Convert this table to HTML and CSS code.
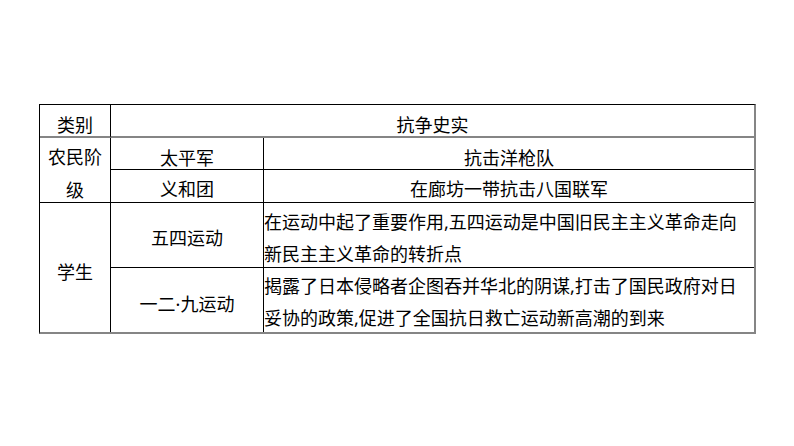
FILE: index.html
```html
<!DOCTYPE html>
<html lang="zh-CN">
<head>
<meta charset="utf-8">
<link rel="stylesheet" href="styles.css">
</head>
<body>
<div class="history">
  <div class="cell head-cat">类别</div>
  <div class="cell head-fact">抗争史实</div>

  <div class="cell farmer">农民阶级</div>
  <div class="cell name row2">太平军</div>
  <div class="cell fact row2 last-col">抗击洋枪队</div>
  <div class="cell name row3">义和团</div>
  <div class="cell fact row3 last-col">在廊坊一带抗击八国联军</div>

  <div class="cell student">学生</div>
  <div class="cell name row4">五四运动</div>
  <div class="cell long row4 last-col">在运动中起了重要作用,五四运动是中国旧民主主义革命走向新民主主义革命的转折点</div>
  <div class="cell name row5 last-row">一二·九运动</div>
  <div class="cell long row5 last-col last-row">揭露了日本侵略者企图吞并华北的阴谋,打击了国民政府对日妥协的政策,促进了全国抗日救亡运动新高潮的到来</div>
</div>
</body>
</html>
```

FILE: styles.css
```css
html, body {
  margin: 0;
  padding: 0;
  background: #ffffff;
}

body {
  font-family: "Noto Sans", "Noto Sans CJK SC", sans-serif;
  color: #000000;
  font-size: 18px;
}

.history {
  margin: 104px 0 0 39px;
  width: 717px;
  box-sizing: border-box;
  display: grid;
  grid-template-columns: 71px 153px 490px;
  grid-template-rows: 33px 32px 33px 65px 64px;
  border-top: 1px solid #000;
  border-left: 1px solid #000;
  border-right: 2px solid #858585;
  border-bottom: 2px solid #858585;
}

.cell {
  box-sizing: border-box;
  border-right: 1px solid #000;
  border-bottom: 1px solid #000;
  text-align: center;
  line-height: 24px;
  white-space: normal;
}

.last-col { border-right: none; }
.last-row { border-bottom: none; }

.head-cat {
  grid-column: 1;
  grid-row: 1;
  padding-top: 8px;
  border-bottom: 2px solid #858585;
}

.head-fact {
  grid-column: 2 / 4;
  grid-row: 1;
  padding-top: 8px;
  border-right: none;
  border-bottom: 2px solid #858585;
}

.farmer {
  grid-column: 1;
  grid-row: 2 / 4;
  line-height: 33px;
  padding-top: 3px;
}

.student {
  grid-column: 1;
  grid-row: 4 / 6;
  padding-top: 57px;
  border-bottom: none;
}

.name { grid-column: 2; }
.fact { grid-column: 3; }
.long {
  grid-column: 3;
  text-align: left;
  line-height: 31.5px;
  padding-right: 12px;
}

.row2 { grid-row: 2; padding-top: 8px; }
.row3 { grid-row: 3; padding-top: 7px; }
.row4 { grid-row: 4; }
.row5 { grid-row: 5; }

.name.row4 { padding-top: 23px; }
.name.row5 { padding-top: 24px; }
.long.row4 { padding-top: 4px; }
.long.row5 { padding-top: 3px; }
```
